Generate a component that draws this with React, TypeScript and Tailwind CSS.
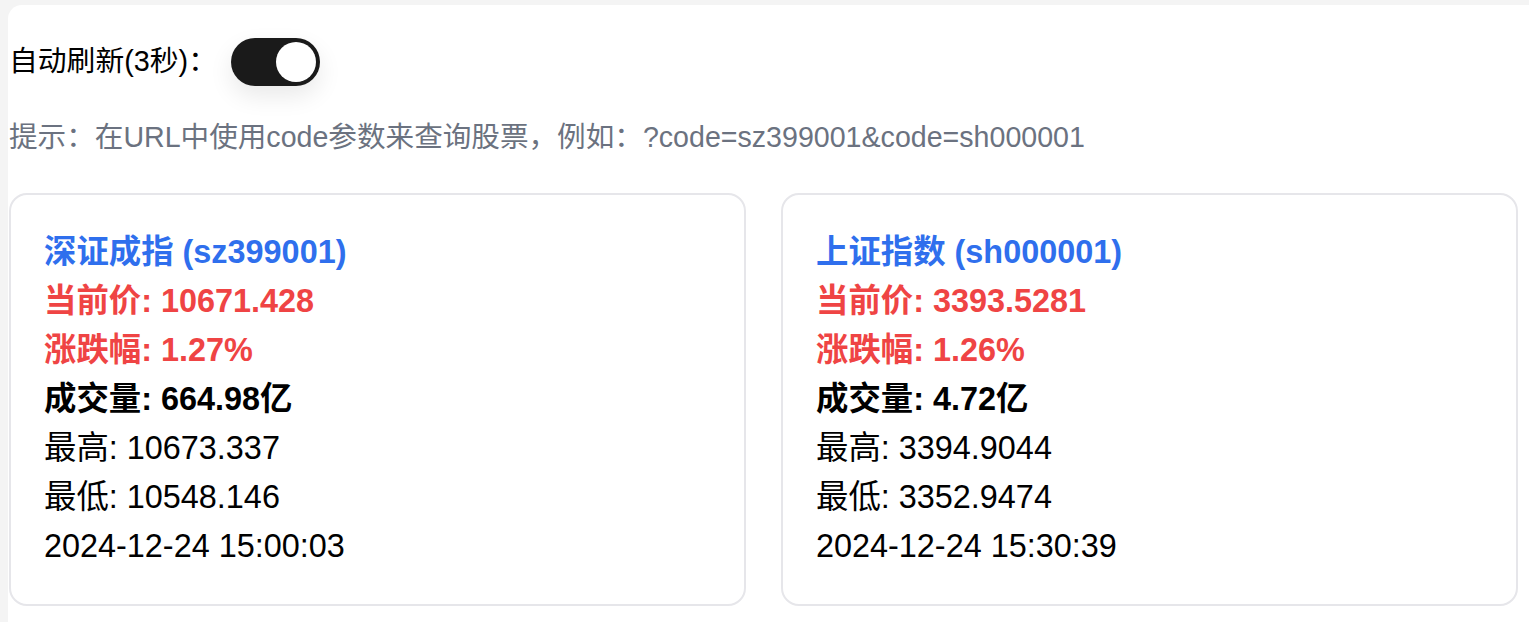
import React from "react";

type Stock = {
  name: string;
  code: string;
  price: string;
  change: string;
  volume: string;
  high: string;
  low: string;
  time: string;
};

const stocks: Stock[] = [
  {
    name: "深证成指",
    code: "sz399001",
    price: "10671.428",
    change: "1.27%",
    volume: "664.98亿",
    high: "10673.337",
    low: "10548.146",
    time: "2024-12-24 15:00:03",
  },
  {
    name: "上证指数",
    code: "sh000001",
    price: "3393.5281",
    change: "1.26%",
    volume: "4.72亿",
    high: "3394.9044",
    low: "3352.9474",
    time: "2024-12-24 15:30:39",
  },
];

function Card({ s }: { s: Stock }) {
  return (
    <div className="rounded-[18px] border-2 border-[#e6e6ea] bg-white px-[33px] py-[33px] text-[32.4px] leading-[49px] text-black">
      <div className="font-bold text-[#2f6fed]">
        {s.name} ({s.code})
      </div>
      <div className="font-bold text-[#ef4444]">当前价: {s.price}</div>
      <div className="font-bold text-[#ef4444]">涨跌幅: {s.change}</div>
      <div className="font-bold">成交量: {s.volume}</div>
      <div>最高: {s.high}</div>
      <div>最低: {s.low}</div>
      <div>{s.time}</div>
    </div>
  );
}

export default function App() {
  return (
    <div
      className="h-[622px] overflow-hidden bg-[#f4f4f4] pl-[8px] pt-[5px]"
      style={{ fontFamily: '"Liberation Sans", "Noto Sans CJK SC", sans-serif' }}
    >
      <div className="h-[700px] rounded-tl-[14px] bg-white pl-[1px] pr-[11px] pt-[32px]">
        <div className="flex h-[49px] items-center gap-[14px]">
          <span className="text-[28.8px] text-black">自动刷新(3秒)：</span>
          <div className="flex h-[48px] w-[89px] items-center justify-end rounded-full bg-[#1a1a1a] px-[4px] shadow-[0_10px_24px_rgba(0,0,0,0.09)]">
            <div className="h-[40px] w-[40px] rounded-full bg-white" />
          </div>
        </div>
        <div className="mt-[30px] text-[28.6px] leading-[43px] text-[#6b7280]">
          提示：在URL中使用code参数来查询股票，例如：?code=sz399001&amp;code=sh000001
        </div>
        <div className="mt-[34px] grid grid-cols-2 gap-[35px]">
          {stocks.map((s) => (
            <Card key={s.code} s={s} />
          ))}
        </div>
      </div>
    </div>
  );
}
